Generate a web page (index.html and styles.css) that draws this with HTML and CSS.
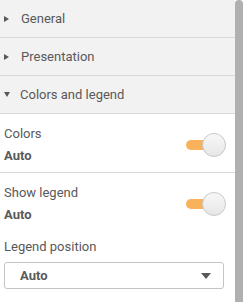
FILE: index.html
```html
<!DOCTYPE html>
<html lang="en">
<head>
  <meta charset="UTF-8" />
  <title>Properties</title>
  <link rel="stylesheet" href="styles.css">
</head>
<body>
  <div class="panel">
    <div class="props">
      <div class="section-head">
        <span class="caret caret-right"></span>
        <span>General</span>
      </div>
      <div class="section-head">
        <span class="caret caret-right"></span>
        <span>Presentation</span>
      </div>
      <div class="section-head">
        <span class="caret caret-down"></span>
        <span>Colors and legend</span>
      </div>
      <div class="section-body">
        <div class="row row-divided">
          <div class="row-text">
            <div class="label">Colors</div>
            <div class="value">Auto</div>
          </div>
          <div class="toggle"><span class="track"></span><span class="knob"></span></div>
        </div>
        <div class="row">
          <div class="row-text">
            <div class="label">Show legend</div>
            <div class="value">Auto</div>
          </div>
          <div class="toggle"><span class="track"></span><span class="knob"></span></div>
        </div>
        <div class="field">
          <div class="label">Legend position</div>
          <div class="select">
            <span>Auto</span>
            <span class="select-arrow"></span>
          </div>
        </div>
      </div>
    </div>
    <div class="scrollbar"></div>
  </div>
</body>
</html>
```

FILE: styles.css
```css
body {
  margin: 0;
  font-family: Roboto, Arial, sans-serif;
  font-size: 13px;
  color: #595959;
  background: #fff;
}
.panel {
  display: flex;
  height: 302px;
  overflow: hidden;
}
.props {
  width: 235px;
  background: #fff;
}
.scrollbar {
  width: 8px;
  background: #b0b0b0;
  border-radius: 4px 4px 0 0;
}
.section-head {
  display: flex;
  align-items: center;
  height: 37px;
  background: #f2f2f2;
  border-bottom: 1px solid #d9d9d9;
  padding-left: 4px;
}
.caret {
  width: 0;
  height: 0;
}
.caret-right {
  border-top: 3.5px solid transparent;
  border-bottom: 3.5px solid transparent;
  border-left: 5px solid #595959;
  margin-right: 12px;
}
.caret-down {
  border-left: 3.5px solid transparent;
  border-right: 3.5px solid transparent;
  border-top: 5px solid #595959;
  margin-right: 10px;
}
.row {
  display: flex;
  align-items: flex-start;
  justify-content: space-between;
  height: 49px;
  padding: 9px 9px 0 4px;
}
.row-divided {
  border-bottom: 1px solid #d9d9d9;
}
.label { line-height: 22px; }
.value { font-weight: bold; line-height: 22px; }
.toggle {
  position: relative;
  width: 40px;
  height: 24px;
  margin-top: 10px;
}
.track {
  position: absolute;
  left: 0;
  top: 7px;
  width: 26px;
  height: 10px;
  border-radius: 5px;
  background: #f8b25b;
}
.knob {
  position: absolute;
  right: 0;
  top: 0;
  width: 22px;
  height: 22px;
  border-radius: 50%;
  background: linear-gradient(#f8f8f8, #e6e6e6);
  border: 1px solid #c8c8c8;
}
.field { padding: 5px 11px 0 4px; }
.select {
  display: flex;
  align-items: center;
  justify-content: space-between;
  height: 25px;
  margin-top: 4px;
  border: 1px solid #c4c4c4;
  border-radius: 3px;
  padding: 0 12px 0 15px;
  font-weight: bold;
}
.select-arrow {
  border-left: 5px solid transparent;
  border-right: 5px solid transparent;
  border-top: 6px solid #595959;
}
```
